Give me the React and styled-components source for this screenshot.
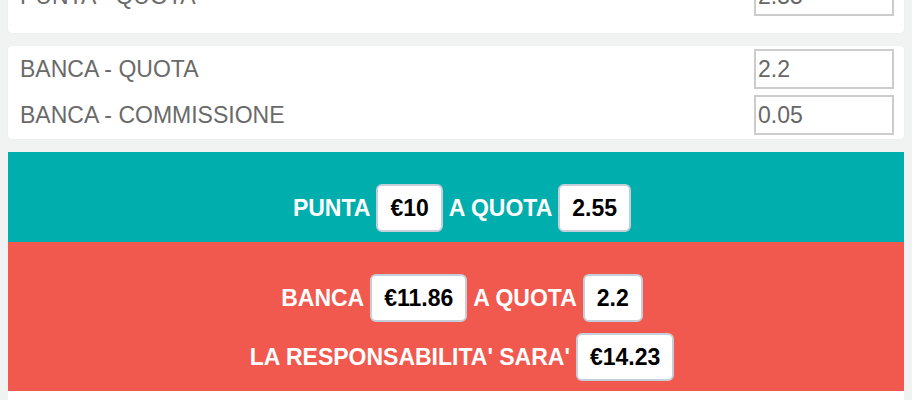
import React from "react";
import styled, { createGlobalStyle } from "styled-components";

const GlobalStyle = createGlobalStyle`
  html, body { margin: 0; padding: 0; }
  body {
    background: #f1f2f2;
    font-family: "Liberation Sans", Arial, Helvetica, sans-serif;
  }
`;

const Page = styled.div`
  padding: 0 8px;
  margin-top: -73px;
`;

const Card = styled.div`
  background: #fff;
  border-radius: 4px;
  box-shadow: 0 0 1px rgba(0, 0, 0, 0.12);
  padding: 3px 10px ${(p) => p.$bottom || 4}px 12px;
  margin-bottom: 13px;
  display: flex;
  flex-direction: column;
  gap: 6px;
`;

const Row = styled.div`
  display: flex;
  align-items: center;
  justify-content: space-between;
  height: 40px;
`;

const Label = styled.span`
  font-size: 23px;
  color: #6a6a6a;
`;

const Input = styled.input`
  box-sizing: border-box;
  width: 140px;
  height: 40px;
  border: 2px solid #cccccc;
  border-radius: 0;
  padding: 0 2px;
  font-family: "Liberation Sans", Arial, sans-serif;
  font-size: 23px;
  color: #666;
  background: #fff;
  outline: none;
`;

const Result = styled.div`
  background: ${(p) => p.$bg};
  padding: 32px 0 10px 12px;
  display: flex;
  flex-direction: column;
  align-items: center;
  gap: 11px;
`;

const Line = styled.div`
  display: flex;
  align-items: center;
  gap: 6px;
  color: #fff;
  font-weight: bold;
  font-size: 23px;
`;

const Pill = styled.span`
  display: inline-block;
  background: #fff;
  color: #000;
  border: 2px solid #c5cfd9;
  border-radius: 6px;
  padding: 10px 12px;
  line-height: 24px;
  font-weight: bold;
  font-size: 23px;
`;

const Footer = styled.div`
  background: #fff;
  height: 40px;
`;

export default function App() {
  return (
    <>
      <GlobalStyle />
      <Page>
        <Card $bottom={17}>
          <Row>
            <Label>PUNTA - IMPORTO</Label>
            <Input defaultValue="10" />
          </Row>
          <Row>
            <Label>PUNTA - QUOTA</Label>
            <Input defaultValue="2.55" />
          </Row>
        </Card>
        <Card>
          <Row>
            <Label>BANCA - QUOTA</Label>
            <Input defaultValue="2.2" />
          </Row>
          <Row>
            <Label>BANCA - COMMISSIONE</Label>
            <Input defaultValue="0.05" />
          </Row>
        </Card>
        <Result $bg="#00aeae">
          <Line>
            PUNTA <Pill>€10</Pill> A QUOTA <Pill>2.55</Pill>
          </Line>
        </Result>
        <Result $bg="#f1594f">
          <Line>
            BANCA <Pill>€11.86</Pill> A QUOTA <Pill>2.2</Pill>
          </Line>
          <Line>
            LA RESPONSABILITA' SARA' <Pill>€14.23</Pill>
          </Line>
        </Result>
        <Footer />
      </Page>
    </>
  );
}
